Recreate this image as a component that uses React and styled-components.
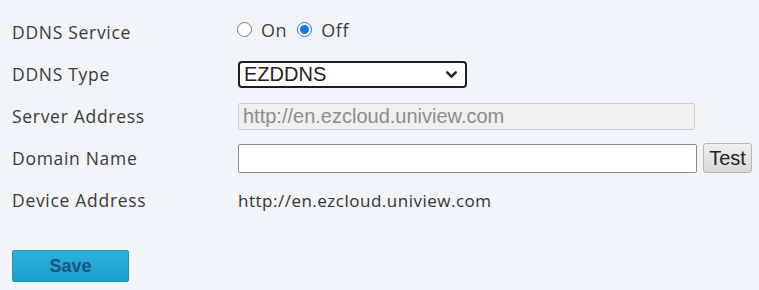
import styled, { createGlobalStyle } from 'styled-components'
import { ChevronDown } from 'lucide-react'

const GlobalStyle = createGlobalStyle`
  html, body {
    margin: 0;
    background: #f2f5f8;
  }
`

const Page = styled.div`
  width: 759px;
  height: 290px;
  box-sizing: border-box;
  padding: 11px 0 0 12px;
  background: #f2f5f8;
  font-family: "Open Sans", "Noto Sans", sans-serif;
  color: #333;
`

const Form = styled.div`
  display: grid;
  grid-template-columns: 226px 1fr;
  grid-auto-rows: 42px;
  align-items: center;
`

const Label = styled.div`
  font-size: 17.5px;
  letter-spacing: 0.7px;
  color: #3a3a3a;
`

const Field = styled.div`
  display: flex;
  align-items: center;
  gap: ${p => p.$gap || 4}px;
`

const RadioGroup = styled.label`
  display: flex;
  align-items: center;
  gap: 9px;
  font-size: 18px;
  font-weight: 500;
  letter-spacing: 0.6px;
  color: #404040;
  margin-top: -5px;
`

const Radio = styled.input`
  width: 15px;
  height: 15px;
  margin: 0 0 0 -1px;
  accent-color: #1a73e8;
`

const SelectBox = styled.div`
  position: relative;
  width: 229px;
  height: 27px;
  box-sizing: border-box;
  border: 2px solid #1e1e1e;
  border-radius: 4px;
  background: #fff;
  display: flex;
  align-items: center;
  padding-left: 4px;
  font-family: "Liberation Sans", Arial, sans-serif;
  font-size: 20px;
  color: #222;
`

const Chevron = styled(ChevronDown)`
  position: absolute;
  right: 5px;
  top: 3px;
`

const TextInput = styled.input`
  width: ${p => p.$width}px;
  height: ${p => p.$height}px;
  box-sizing: border-box;
  margin: 0;
  padding: 0 4px;
  border: 1px solid ${p => (p.disabled ? '#cfcfcf' : '#8a8a8a')};
  border-radius: 2px;
  background: ${p => (p.disabled ? '#f0f0f0' : '#fff')};
  font-family: "Liberation Sans", Arial, sans-serif;
  font-size: 20px;
  color: #8c8c8c;
  outline: none;
`

const TestButton = styled.button`
  width: 49px;
  height: 30px;
  margin: 0 0 0 2px;
  padding: 0;
  border: 1px solid #b7b7b7;
  border-radius: 3px;
  background: linear-gradient(#f0f0f0, #d9d9d9);
  font-family: "Liberation Sans", Arial, sans-serif;
  font-size: 20px;
  color: #222;
`

const Value = styled.div`
  font-size: 17px;
  letter-spacing: 0.5px;
  color: #333;
`

const SaveButton = styled.button`
  margin-top: 29px;
  width: 117px;
  height: 32px;
  border: 1px solid #1c93c0;
  border-radius: 2px;
  background: linear-gradient(#2cb2dc, #1b9ecb);
  font-family: "Liberation Sans", Arial, sans-serif;
  font-size: 18px;
  font-weight: bold;
  color: #1d5283;
  padding: 0;
`

const App = () => {
  return (
    <Page>
      <GlobalStyle />
      <Form>
        <Label>DDNS Service</Label>
        <Field $gap={11}>
          <RadioGroup>
            <Radio type="radio" name="ddns" /> On
          </RadioGroup>
          <RadioGroup>
            <Radio type="radio" name="ddns" defaultChecked /> Off
          </RadioGroup>
        </Field>

        <Label>DDNS Type</Label>
        <Field>
          <SelectBox>
            EZDDNS
            <Chevron size={17} strokeWidth={3.5} color="#222" />
          </SelectBox>
        </Field>

        <Label>Server Address</Label>
        <Field>
          <TextInput $width={457} $height={27} disabled defaultValue="http://en.ezcloud.uniview.com" />
        </Field>

        <Label>Domain Name</Label>
        <Field>
          <TextInput $width={459} $height={29} />
          <TestButton>Test</TestButton>
        </Field>

        <Label>Device Address</Label>
        <Value>http://en.ezcloud.uniview.com</Value>
      </Form>
      <SaveButton>Save</SaveButton>
    </Page>
  )
}

export default App
